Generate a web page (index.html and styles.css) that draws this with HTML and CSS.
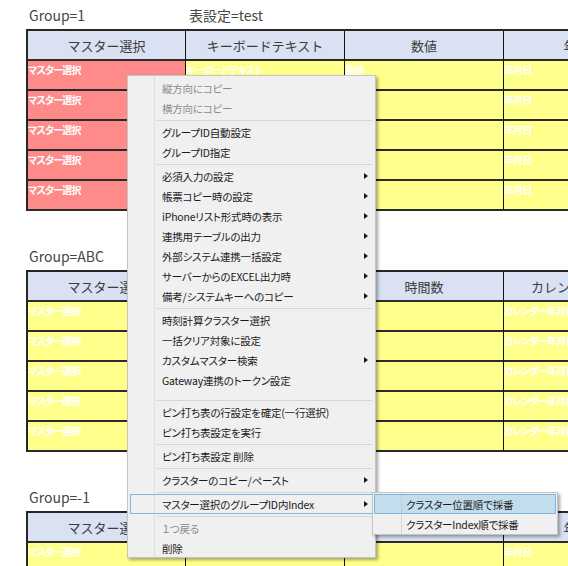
FILE: index.html
```html
<!DOCTYPE html>
<html lang="ja">
<head>
<meta charset="utf-8">
<link rel="stylesheet" href="styles.css">
</head>
<body>
<div class="page">
  <section class="group">
    <div class="title"><span>Group=1</span><span>表設定=test</span></div>
    <div class="grid">
      <div class="row head"><div class="c">マスター選択</div><div class="c">キーボードテキスト</div><div class="c">数値</div><div class="c">年月日</div></div>
      <div class="row"><div class="c red">マスター選択</div><div class="c yel">キーボードテキスト</div><div class="c yel">数値</div><div class="c yel">年月日</div></div>
      <div class="row"><div class="c red">マスター選択</div><div class="c yel"></div><div class="c yel"></div><div class="c yel">年月日</div></div>
      <div class="row"><div class="c red">マスター選択</div><div class="c yel"></div><div class="c yel"></div><div class="c yel">年月日</div></div>
      <div class="row"><div class="c red">マスター選択</div><div class="c yel"></div><div class="c yel"></div><div class="c yel">年月日</div></div>
      <div class="row"><div class="c red">マスター選択</div><div class="c yel"></div><div class="c yel"></div><div class="c yel">年月日</div></div>
    </div>
  </section>
  <section class="group">
    <div class="title"><span>Group=ABC</span></div>
    <div class="grid">
      <div class="row head"><div class="c">マスター選択</div><div class="c"></div><div class="c">時間数</div><div class="c">カレンダー年月日</div></div>
      <div class="row"><div class="c yel">マスター選択</div><div class="c yel"></div><div class="c yel"></div><div class="c yel">カレンダー年月日</div></div>
      <div class="row"><div class="c yel">マスター選択</div><div class="c yel"></div><div class="c yel"></div><div class="c yel">カレンダー年月日</div></div>
      <div class="row"><div class="c yel">マスター選択</div><div class="c yel"></div><div class="c yel"></div><div class="c yel">カレンダー年月日</div></div>
      <div class="row"><div class="c yel">マスター選択</div><div class="c yel"></div><div class="c yel"></div><div class="c yel">カレンダー年月日</div></div>
      <div class="row"><div class="c yel">マスター選択</div><div class="c yel"></div><div class="c yel"></div><div class="c yel">カレンダー年月日</div></div>
    </div>
  </section>
  <section class="group">
    <div class="title"><span>Group=-1</span></div>
    <div class="grid">
      <div class="row head"><div class="c">マスター選択</div><div class="c"></div><div class="c"></div><div class="c">年月日</div></div>
      <div class="row"><div class="c yel">マスター選択</div><div class="c yel"></div><div class="c yel"></div><div class="c yel">年月日</div></div>
    </div>
  </section>

  <div class="menu">
    <div class="mi dis">縦方向にコピー</div>
    <div class="mi dis">横方向にコピー</div>
    <div class="sep"></div>
    <div class="mi">グループID自動設定</div>
    <div class="mi">グループID指定</div>
    <div class="sep"></div>
    <div class="mi sub">必須入力の設定</div>
    <div class="mi sub">帳票コピー時の設定</div>
    <div class="mi sub">iPhoneリスト形式時の表示</div>
    <div class="mi sub">連携用テーブルの出力</div>
    <div class="mi sub">外部システム連携一括設定</div>
    <div class="mi sub">サーバーからのEXCEL出力時</div>
    <div class="mi sub">備考/システムキーへのコピー</div>
    <div class="sep"></div>
    <div class="mi">時刻計算クラスター選択</div>
    <div class="mi">一括クリア対象に設定</div>
    <div class="mi sub">カスタムマスター検索</div>
    <div class="mi">Gateway連携のトークン設定</div>
    <div class="spacer"></div>
    <div class="sep"></div>
    <div class="mi">ピン打ち表の行設定を確定(一行選択)</div>
    <div class="mi">ピン打ち表設定を実行</div>
    <div class="sep"></div>
    <div class="mi">ピン打ち表設定 削除</div>
    <div class="sep"></div>
    <div class="mi sub">クラスターのコピー/ペースト</div>
    <div class="sep"></div>
    <div class="mi sub open">マスター選択のグループID内Index</div>
    <div class="sep"></div>
    <div class="mi dis">１つ戻る</div>
    <div class="mi">削除</div>
  </div>

  <div class="submenu">
    <div class="si hot">クラスター位置順で採番</div>
    <div class="si">クラスターIndex順で採番</div>
  </div>
</div>
</body>
</html>
```

FILE: styles.css
```css
html, body {
  margin: 0;
  padding: 0;
  background: #ffffff;
}
body {
  font-family: "Noto Sans CJK JP", "Noto Sans", sans-serif;
}
.page {
  position: relative;
  width: 568px;
  height: 566px;
  overflow: hidden;
  padding-left: 26px;
  box-sizing: border-box;
}
.group + .group {
  margin-top: 30px;
}
.title {
  display: grid;
  grid-template-columns: 160px 159px;
  height: 29px;
  align-items: center;
  font-size: 14px;
  color: #454545;
}
.title span {
  padding-left: 3px;
}
.grid {
  width: 637px;
  border-top: 2px solid #262626;
  border-left: 2px solid #262626;
}
.row {
  display: grid;
  grid-template-columns: 158px 159px 159px 159px;
  height: 30px;
}
.c {
  box-sizing: border-box;
  border-right: 1px solid #111;
  border-bottom: 2px solid #2b2b2b;
  overflow: hidden;
  white-space: nowrap;
}
.head .c {
  background: #d9e1f2;
  display: flex;
  align-items: center;
  justify-content: center;
  font-size: 13px;
  color: #3c3c3c;
}
.red, .yel {
  color: #ffffff;
  font-size: 10px;
  font-weight: bold;
  line-height: 12px;
  padding-top: 3px;
  letter-spacing: -0.8px;
  font-feature-settings: "palt";
}
.red {
  background: #ff8a8a;
}
.yel {
  background: #ffff8c;
}

/* context menu */
.menu {
  position: absolute;
  left: 127px;
  top: 75px;
  width: 249px;
  height: 483px;
  box-sizing: border-box;
  border: 1px solid #c4c4c4;
  padding: 2px;
  background-color: #f0f0f0;
  background-image: linear-gradient(to right, transparent 26px, #dedede 26px, #dedede 27px, transparent 27px);
  box-shadow: 2px 2px 3px rgba(0, 0, 0, 0.35);
  font-size: 10.5px;
  letter-spacing: -0.2px;
  font-feature-settings: "palt";
  color: #1a1a1a;
  z-index: 2;
}
.mi {
  position: relative;
  height: 20px;
  box-sizing: border-box;
  display: flex;
  align-items: center;
  padding-left: 32px;
  white-space: nowrap;
}
.mi.dis {
  color: #8c8c8c;
}
.mi.sub::after {
  content: "";
  position: absolute;
  right: 5px;
  top: 6.5px;
  border-left: 4px solid #1a1a1a;
  border-top: 3.5px solid transparent;
  border-bottom: 3.5px solid transparent;
}
.mi.open {
  border: 1px solid #7ab7e6;
  padding-left: 31px;
}
.mi.open::after {
  right: 4px;
  top: 5.5px;
}
.sep {
  height: 4px;
  display: flex;
  align-items: center;
  padding-left: 27px;
  padding-right: 1px;
}
.sep::before {
  content: "";
  flex: 1;
  height: 1px;
  background: #d6d6d6;
}
.spacer {
  height: 8px;
}

.submenu {
  position: absolute;
  left: 372px;
  top: 492px;
  width: 186px;
  height: 43px;
  box-sizing: border-box;
  border: 1px solid #c4c4c4;
  padding: 1px 1px 0;
  background-color: #f0f0f0;
  background-image: linear-gradient(to right, transparent 28px, #d4d4d4 28px, #d4d4d4 29px, transparent 29px);
  box-shadow: 2px 2px 3px rgba(0, 0, 0, 0.35);
  font-size: 10.5px;
  letter-spacing: -0.2px;
  font-feature-settings: "palt";
  color: #1a1a1a;
  z-index: 3;
}
.si {
  height: 20px;
  box-sizing: border-box;
  display: flex;
  align-items: center;
  padding-left: 32px;
  white-space: nowrap;
}
.si.hot {
  background: rgba(160, 205, 235, 0.55);
  border: 1px solid #7ab7e6;
  padding-left: 31px;
}
```
